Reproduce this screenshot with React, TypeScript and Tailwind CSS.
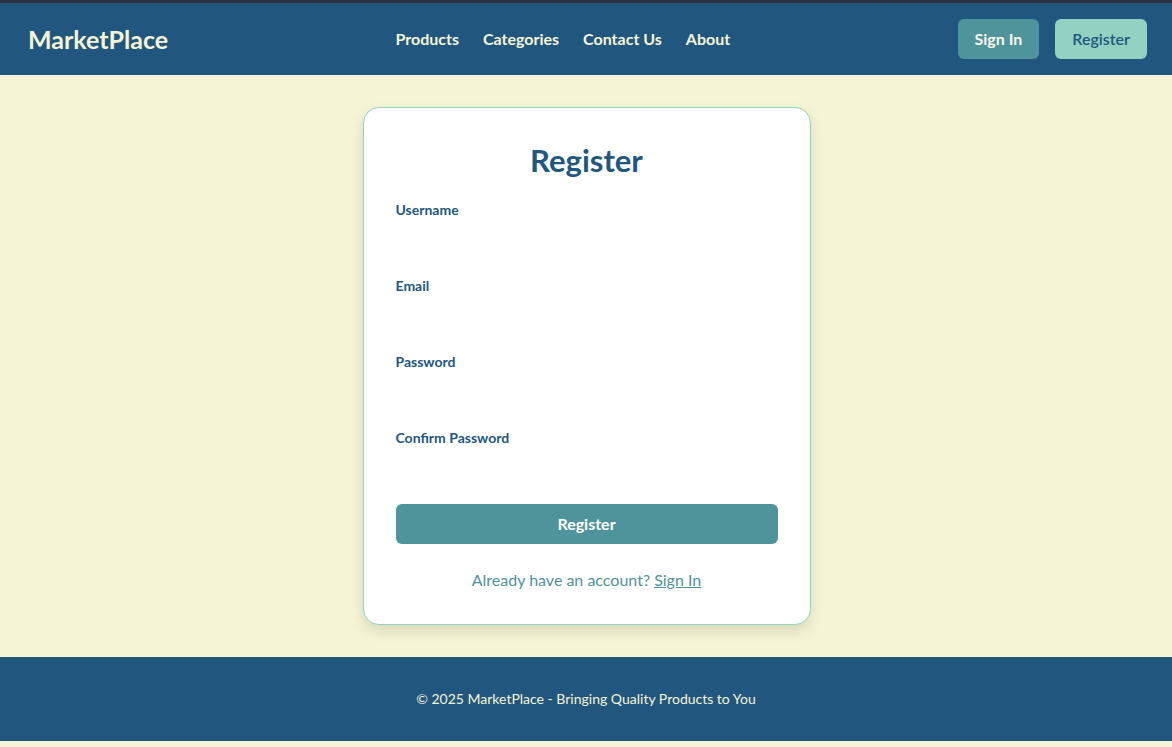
import React from "react";

const font = { fontFamily: "Lato, 'Noto Sans', sans-serif" };

function Field({ label, type }: { label: string; type: string }) {
  return (
    <div className="mb-4">
      <label className="block text-[14px] leading-5 font-bold text-[#21577f]">{label}</label>
      <input
        type={type}
        className="block w-full h-10 bg-white outline-none border-0 text-[#21577f] px-0"
      />
    </div>
  );
}

export default function App() {
  return (
    <div className="min-h-screen bg-[#f5f5d5]" style={font}>
      <div className="h-[3px] bg-[#2c333e]" />
      <header className="bg-[#21577f] flex items-center justify-between pl-[28px] pr-[25px] py-4">
        <div className="text-[25px] leading-10 font-bold text-[#f5f5d5]">MarketPlace</div>
        <nav className="flex items-center gap-6">
          {["Products", "Categories", "Contact Us", "About"].map((n) => (
            <a key={n} className="text-[16px] font-bold text-[#f5f5d5] leading-6">
              {n}
            </a>
          ))}
        </nav>
        <div className="flex items-center gap-4">
          <button className="h-10 px-[17px] rounded-md bg-[#4f939b] text-[#f8f8ec] text-[16px] font-bold">
            Sign In
          </button>
          <button className="h-10 px-[17px] rounded-md bg-[#93d1c0] text-[#21577f] text-[16px] font-semibold">
            Register
          </button>
        </div>
      </header>
      <main className="py-8 flex justify-center">
        <div className="w-[448px] ml-[1px] bg-white border border-[#92d2c0] rounded-2xl px-8 pt-8 pb-8 shadow-[0_6px_14px_rgba(0,0,0,0.12)]">
          <h1 className="text-center text-[31px] leading-10 font-bold text-[#21577f] mb-5">Register</h1>
          <Field label="Username" type="text" />
          <Field label="Email" type="email" />
          <Field label="Password" type="password" />
          <Field label="Confirm Password" type="password" />
          <button className="w-full h-10 rounded-md bg-[#4f939b] text-white text-[16px] font-bold">
            Register
          </button>
          <p className="mt-6 text-center text-[16px] leading-6 text-[#4f939b]">
            Already have an account? <a className="underline">Sign In</a>
          </p>
        </div>
      </main>
      <footer className="bg-[#21577f] py-8 text-center text-[14px] leading-5 text-[#f5f5d5]">
        © 2025 MarketPlace - Bringing Quality Products to You
      </footer>
    </div>
  );
}
